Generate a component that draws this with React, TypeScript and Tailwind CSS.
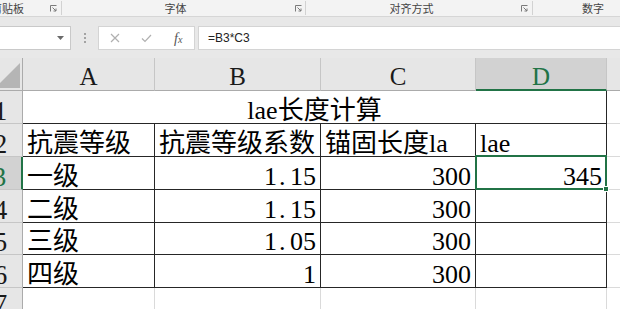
import React from "react";

const SERIF = "[font-family:'Liberation_Serif','Noto_Sans_CJK_SC',serif]";
const UI = "[font-family:'Noto_Sans_CJK_SC','Liberation_Sans',sans-serif]";

const ROWS: { label: string; cells: string[]; numeric: boolean }[] = [
  { label: "2", cells: ["抗震等级", "抗震等级系数", "锚固长度la", "lae"], numeric: false },
  { label: "3", cells: ["一级", "1.15", "300", "345"], numeric: true },
  { label: "4", cells: ["二级", "1.15", "300", ""], numeric: true },
  { label: "5", cells: ["三级", "1.05", "300", ""], numeric: true },
  { label: "6", cells: ["四级", "1", "300", ""], numeric: true },
];

function Launcher() {
  return (
    <svg width="7" height="7" viewBox="0 0 7 7" className="shrink-0">
      <path d="M0.5 6.5V0.5H6.5" fill="none" stroke="#7a7a7a" strokeWidth="1" />
      <path d="M2.5 2.5L6 6M6 3.5V6H3.5" fill="none" stroke="#7a7a7a" strokeWidth="1" />
    </svg>
  );
}

function Num({ v }: { v: string }) {
  const [a, b] = v.split(".");
  if (b === undefined) return <>{v}</>;
  return (
    <>
      {a}
      <span className="inline-block w-[13px] pl-[2px]">.</span>
      {b}
    </>
  );
}

function RowHead({ n, active }: { n: string; active?: boolean }) {
  return (
    <div
      className={
        active
          ? `flex items-end justify-end overflow-hidden bg-[#d2d2d2] border-b border-b-[#c6c6c6] border-r-2 border-r-[#217346] text-[#217346] text-[27px] leading-[24px] ${SERIF}`
          : `flex items-end justify-end overflow-hidden bg-[#e6e6e6] border-b border-b-[#c6c6c6] border-r border-r-[#ababab] text-[#1a1a1a] text-[27px] leading-[24px] ${SERIF}`
      }
    >
      <span className="shrink-0 w-[43px] text-center">{n}</span>
    </div>
  );
}

function ColHead({ c, active }: { c: string; active?: boolean }) {
  return (
    <div
      className={
        active
          ? `flex items-center justify-center pt-[5px] bg-[#d2d2d2] border-r border-r-[#c6c6c6] border-b-2 border-b-[#217346] text-[#217346] text-[25px] leading-none ${SERIF}`
          : `flex items-center justify-center pt-[5px] bg-[#e6e6e6] border-r border-r-[#c6c6c6] border-b border-b-[#ababab] text-[#1a1a1a] text-[25px] leading-none ${SERIF}`
      }
    >
      {c}
    </div>
  );
}

export default function App() {
  return (
    <div className="w-[620px] h-[309px] overflow-hidden bg-white flex flex-col">
      {/* ribbon group labels */}
      <div className={`h-[17px] shrink-0 flex bg-[#f3f3f3] border-b border-[#d6d6d6] text-[11px] text-[#444] ${UI}`}>
        <div className="w-[61px] flex items-center">
          <span className="-ml-[9px] whitespace-nowrap">剪贴板</span>
          <span className="ml-auto mr-[4px] flex"><Launcher /></span>
        </div>
        <div className="w-px bg-[#d2d2d2] my-[1px]" />
        <div className="w-[243px] flex items-center">
          <span className="flex-1 text-center">字体</span>
          <span className="ml-[6px] mr-[3px] flex"><Launcher /></span>
        </div>
        <div className="w-px bg-[#d2d2d2] my-[1px]" />
        <div className="w-[226px] flex items-center">
          <span className="flex-1 text-center">对齐方式</span>
          <span className="ml-[4px] mr-[4px] flex"><Launcher /></span>
        </div>
        <div className="w-px bg-[#d2d2d2] my-[1px]" />
        <div className="flex-1 flex items-center">
          <span className="ml-[49px]">数字</span>
        </div>
      </div>

      <div className="h-[9px] shrink-0 bg-[#e8e8e8]" />

      {/* formula bar */}
      <div className="h-[24px] shrink-0 flex bg-[#e8e8e8]">
        <div className="w-[71px] bg-white border border-l-0 border-[#c9c9c9] flex items-center justify-end pr-[6px]">
          <svg width="7" height="4" viewBox="0 0 7 4">
            <path d="M0 0H7L3.5 4Z" fill="#6a6a6a" />
          </svg>
        </div>
        <div className="w-[27px] flex flex-col items-center justify-center gap-[2px]">
          <span className="w-[2px] h-[2px] bg-[#a3a3a3]" />
          <span className="w-[2px] h-[2px] bg-[#a3a3a3]" />
          <span className="w-[2px] h-[2px] bg-[#a3a3a3]" />
        </div>
        <div className="w-[97px] bg-white border border-[#d4d4d4] flex items-center">
          <div className="w-[32px] flex justify-center">
            <svg width="10" height="10" viewBox="0 0 10 10">
              <path d="M1 1L9 9M9 1L1 9" stroke="#b0b0b0" strokeWidth="1.2" />
            </svg>
          </div>
          <div className="w-[32px] flex justify-center">
            <svg width="11" height="9" viewBox="0 0 11 9">
              <path d="M1 4.5L4 7.5L10 1" fill="none" stroke="#b0b0b0" strokeWidth="1.2" />
            </svg>
          </div>
          <div className="w-[32px] flex justify-center items-baseline italic text-[#555] [font-family:'Liberation_Serif',serif]">
            <span className="text-[14px]">f</span>
            <span className="text-[10px]">x</span>
          </div>
        </div>
        <div className="ml-[3px] flex-1 bg-white border border-r-0 border-[#d4d4d4] flex items-center pl-[9px] text-[12px] text-[#222] [font-family:'Liberation_Sans',sans-serif]">
          =B3*C3
        </div>
      </div>

      <div className="h-[8px] shrink-0 bg-[#e8e8e8]" />

      {/* sheet grid */}
      <div className="flex-1 grid grid-cols-[23px_132px_166px_155px_131px_1fr] grid-rows-[33px_33px_33px_33px_33px_32px_33px_1fr] text-black">
        {/* header row */}
        <div className="bg-[#e6e6e6] border-r border-b border-[#ababab] overflow-hidden">
          <svg width="22" height="32" viewBox="0 0 22 32">
            <polygon points="20,5 20,30 -5,30" fill="#b5b5b5" />
          </svg>
        </div>
        <ColHead c="A" />
        <ColHead c="B" />
        <ColHead c="C" />
        <ColHead c="D" active />
        <div className="bg-[#e6e6e6] border-b border-b-[#ababab]" />

        {/* row 1: merged title */}
        <RowHead n="1" />
        <div className={`col-span-4 flex items-end justify-center border-r border-b border-[#262626] text-[26px] leading-[24px] whitespace-nowrap ${SERIF}`}>
          lae长度计算
        </div>
        <div className="border-b border-[#dadada]" />

        {ROWS.map((r) => (
          <React.Fragment key={r.label}>
            <RowHead n={r.label} active={r.label === "3"} />
            {r.cells.map((c, i) => {
              const right = r.numeric && i > 0;
              const selected = r.label === "3" && i === 3;
              return (
                <div
                  key={i}
                  className={
                    right
                      ? `relative flex items-end justify-end pr-[4px] border-r border-b border-[#262626] text-[26px] leading-[24px] whitespace-nowrap ${SERIF}`
                      : `relative flex items-end justify-start pl-[4px] border-r border-b border-[#262626] text-[26px] leading-[24px] whitespace-nowrap ${SERIF}`
                  }
                >
                  {right ? <Num v={c} /> : c}
                  {selected && (
                    <div className="absolute -top-[2px] -left-[1px] -right-[1px] -bottom-[1px] border-2 border-[#217346] z-10">
                      <div className="absolute -right-[4px] -bottom-[4px] w-[6px] h-[6px] bg-[#217346] border border-white" />
                    </div>
                  )}
                </div>
              );
            })}
            <div className="border-b border-[#dadada]" />
          </React.Fragment>
        ))}

        {/* row 7, cut by the window edge */}
        <div className={`flex items-start justify-end overflow-hidden bg-[#e6e6e6] border-r border-r-[#ababab] text-[#1a1a1a] text-[27px] leading-[24px] ${SERIF}`}>
          <span className="shrink-0 w-[43px] text-center pt-[4px]">7</span>
        </div>
        <div className="border-r border-[#dadada]" />
        <div className="border-r border-[#dadada]" />
        <div className="border-r border-[#dadada]" />
        <div className="border-r border-[#dadada]" />
        <div />
      </div>
    </div>
  );
}
